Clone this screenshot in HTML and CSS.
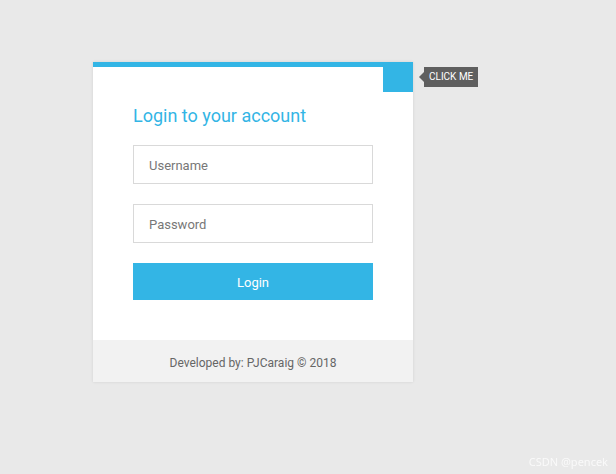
FILE: index.html
```html
<!DOCTYPE html>
<html>
<head>
<meta charset="utf-8">
<link rel="stylesheet" href="styles.css">
</head>
<body>
<div class="page">
  <div class="card">
    <div class="toggle"></div>
    <div class="tooltip">CLICK ME</div>
    <div class="form">
      <h2 class="title">Login to your account</h2>
      <div class="field"><input class="input" type="text" placeholder="Username"></div>
      <div class="field"><input class="input" type="password" placeholder="Password"></div>
      <button class="btn">Login</button>
    </div>
    <div class="footer">Developed by: PJCaraig © 2018</div>
  </div>
</div>
<div class="watermark">CSDN @pencek</div>
</body>
</html>
```

FILE: styles.css
```css
html, body {
  margin: 0;
  padding: 0;
  background: #e9e9e9;
  font-family: Roboto, "Liberation Sans", sans-serif;
  height: 100%;
}
.page {
  padding: 62px 0 0 93px;
}
.card {
  position: relative;
  width: 320px;
  background: #fff;
  border-top: 5px solid #33b5e5;
  box-shadow: 0 0 3px rgba(0, 0, 0, 0.1);
}
.toggle {
  position: absolute;
  top: -5px;
  right: 0;
  width: 30px;
  height: 30px;
  background: #33b5e5;
}
.tooltip {
  position: absolute;
  top: 0;
  left: 331px;
  height: 20px;
  line-height: 20px;
  padding: 0 5px;
  background: #5f5f5f;
  color: #fff;
  font-size: 10px;
  white-space: nowrap;
}
.tooltip::before {
  content: "";
  position: absolute;
  left: -5px;
  top: 5px;
  border-top: 5px solid transparent;
  border-bottom: 5px solid transparent;
  border-right: 5px solid #5f5f5f;
}
.form {
  padding: 40px;
}
.title {
  margin: 0 0 20px;
  font-size: 18px;
  line-height: 18px;
  font-weight: 400;
  color: #33b5e5;
}
.field {
  margin-bottom: 20px;
}
.input {
  box-sizing: border-box;
  display: block;
  width: 240px;
  height: 39px;
  margin: 0;
  padding: 2px 15px 0;
  border: 1px solid #d9d9d9;
  outline: none;
  font-family: Roboto, sans-serif;
  font-size: 13px;
  color: #333;
}
.input::placeholder {
  color: #777;
}
.btn {
  display: block;
  width: 240px;
  height: 37px;
  margin: 0;
  padding: 2px 0 0;
  border: 0;
  background: #33b5e5;
  color: #fff;
  font-family: Roboto, sans-serif;
  font-size: 13px;
}
.footer {
  background: #f2f2f2;
  padding: 17px 0 12px;
  line-height: 13px;
  font-size: 12px;
  color: #666;
  text-align: center;
}
.watermark {
  position: fixed;
  right: 8px;
  bottom: 5px;
  font-size: 11px;
  color: rgba(255, 255, 255, 0.75);
  font-family: "Noto Sans", sans-serif;
}
```
